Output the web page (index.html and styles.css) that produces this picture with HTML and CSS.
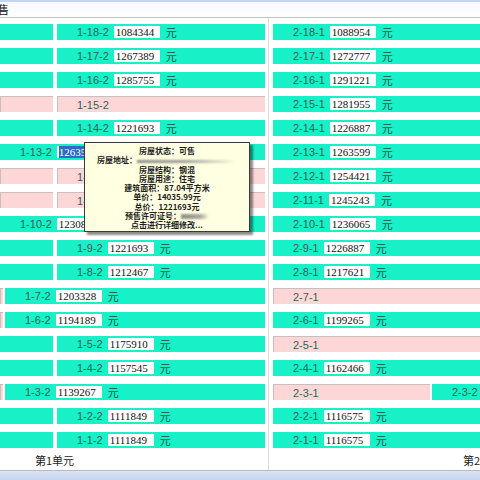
FILE: index.html
```html
<!DOCTYPE html>
<html lang="zh-CN">
<head>
  <meta charset="UTF-8">
  <title>房屋销售</title>
  <link rel="stylesheet" href="styles.css">
</head>
<body>
  <div class="window">
    <div class="titlebar"><span class="title">售</span></div>

    <div class="units">
      <!-- 第1单元 -->
      <div class="unit unit-1">
        <div class="rooms">
          <div class="row"><div class="cell sale stub"></div><div class="cell sale room"><span class="no">1-18-2</span><span class="price">1084344</span><span class="yuan">元</span></div></div>
          <div class="row"><div class="cell sale stub"></div><div class="cell sale room"><span class="no">1-17-2</span><span class="price">1267389</span><span class="yuan">元</span></div></div>
          <div class="row"><div class="cell sale stub"></div><div class="cell sale room"><span class="no">1-16-2</span><span class="price">1285755</span><span class="yuan">元</span></div></div>
          <div class="row"><div class="cell sold stub"></div><div class="cell sold room"><span class="no">1-15-2</span></div></div>
          <div class="row"><div class="cell sale stub"></div><div class="cell sale room"><span class="no">1-14-2</span><span class="price">1221693</span><span class="yuan">元</span></div></div>
          <div class="row"><div class="cell sale room"><span class="no">1-13-2</span><span class="price"><span class="selected">1263599</span></span><span class="yuan">元</span></div></div>
          <div class="row"><div class="cell sold stub"></div><div class="cell sold room"><span class="no">1-12-2</span></div></div>
          <div class="row"><div class="cell sold stub"></div><div class="cell sold room"><span class="no">1-11-2</span></div></div>
          <div class="row"><div class="cell sale room"><span class="no">1-10-2</span><span class="price">1230836</span><span class="yuan">元</span></div></div>
          <div class="row"><div class="cell sale stub"></div><div class="cell sale room"><span class="no">1-9-2</span><span class="price">1221693</span><span class="yuan">元</span></div></div>
          <div class="row"><div class="cell sale stub"></div><div class="cell sale room"><span class="no">1-8-2</span><span class="price">1212467</span><span class="yuan">元</span></div></div>
          <div class="row narrow"><div class="cell sold stub"></div><div class="cell sale room"><span class="no">1-7-2</span><span class="price">1203328</span><span class="yuan">元</span></div></div>
          <div class="row narrow"><div class="cell sold stub"></div><div class="cell sale room"><span class="no">1-6-2</span><span class="price">1194189</span><span class="yuan">元</span></div></div>
          <div class="row"><div class="cell sale stub"></div><div class="cell sale room"><span class="no">1-5-2</span><span class="price">1175910</span><span class="yuan">元</span></div></div>
          <div class="row"><div class="cell sale stub"></div><div class="cell sale room"><span class="no">1-4-2</span><span class="price">1157545</span><span class="yuan">元</span></div></div>
          <div class="row narrow"><div class="cell sold stub"></div><div class="cell sale room"><span class="no">1-3-2</span><span class="price">1139267</span><span class="yuan">元</span></div></div>
          <div class="row"><div class="cell sale stub"></div><div class="cell sale room"><span class="no">1-2-2</span><span class="price">1111849</span><span class="yuan">元</span></div></div>
          <div class="row"><div class="cell sale stub"></div><div class="cell sale room"><span class="no">1-1-2</span><span class="price">1111849</span><span class="yuan">元</span></div></div>
        </div>
        <div class="unit-name">第1单元</div>
      </div>

      <div class="divider"></div>

      <!-- 第2单元 -->
      <div class="unit unit-2">
        <div class="rooms">
          <div class="row"><div class="cell sale room"><span class="no">2-18-1</span><span class="price">1088954</span><span class="yuan">元</span></div></div>
          <div class="row"><div class="cell sale room"><span class="no">2-17-1</span><span class="price">1272777</span><span class="yuan">元</span></div></div>
          <div class="row"><div class="cell sale room"><span class="no">2-16-1</span><span class="price">1291221</span><span class="yuan">元</span></div></div>
          <div class="row"><div class="cell sale room"><span class="no">2-15-1</span><span class="price">1281955</span><span class="yuan">元</span></div></div>
          <div class="row"><div class="cell sale room"><span class="no">2-14-1</span><span class="price">1226887</span><span class="yuan">元</span></div></div>
          <div class="row"><div class="cell sale room"><span class="no">2-13-1</span><span class="price">1263599</span><span class="yuan">元</span></div></div>
          <div class="row"><div class="cell sale room"><span class="no">2-12-1</span><span class="price">1254421</span><span class="yuan">元</span></div></div>
          <div class="row"><div class="cell sale room"><span class="no">2-11-1</span><span class="price">1245243</span><span class="yuan">元</span></div></div>
          <div class="row"><div class="cell sale room"><span class="no">2-10-1</span><span class="price">1236065</span><span class="yuan">元</span></div></div>
          <div class="row"><div class="cell sale room"><span class="no">2-9-1</span><span class="price">1226887</span><span class="yuan">元</span></div></div>
          <div class="row"><div class="cell sale room"><span class="no">2-8-1</span><span class="price">1217621</span><span class="yuan">元</span></div></div>
          <div class="row"><div class="cell sold room"><span class="no">2-7-1</span></div></div>
          <div class="row"><div class="cell sale room"><span class="no">2-6-1</span><span class="price">1199265</span><span class="yuan">元</span></div></div>
          <div class="row"><div class="cell sold room"><span class="no">2-5-1</span></div></div>
          <div class="row"><div class="cell sale room"><span class="no">2-4-1</span><span class="price">1162466</span><span class="yuan">元</span></div></div>
          <div class="row split"><div class="cell sold room half"><span class="no">2-3-1</span></div><div class="cell sale room"><span class="no">2-3-2</span></div></div>
          <div class="row"><div class="cell sale room"><span class="no">2-2-1</span><span class="price">1116575</span><span class="yuan">元</span></div></div>
          <div class="row"><div class="cell sale room"><span class="no">2-1-1</span><span class="price">1116575</span><span class="yuan">元</span></div></div>
        </div>
        <div class="unit-name">第2单元</div>
      </div>
    </div>

    <div class="statusbar"></div>

    <!-- 房屋信息提示 -->
    <div class="tip">
      <div>房屋状态：可售</div>
      <div>房屋地址：<span class="smudge long"></span></div>
      <div>房屋结构：钢混</div>
      <div>房屋用途：住宅</div>
      <div>建筑面积：87.04平方米</div>
      <div>单价：14035.99元</div>
      <div>总价：1221693元</div>
      <div>预售许可证号：<span class="smudge"></span></div>
      <div>点击进行详细修改...</div>
    </div>
  </div>
</body>
</html>
```

FILE: styles.css
```css
body {
  margin: 0;
  background: #fff;
  font-family: "Liberation Sans", Arial, sans-serif;
  overflow: hidden;
}

.window {
  position: relative;
  width: 480px;
  height: 480px;
  overflow: hidden;
}

.titlebar {
  height: 17px;
  border-bottom: 1px solid #b8c5da;
  background: linear-gradient(#c6d5ef 0, #c6d5ef 2px, #f6f8fd 2px, #fff 17px);
  overflow: hidden;
}

.title {
  display: block;
  margin-left: -2px;
  padding-top: 3px;
  font: 11px/12px "Noto Sans CJK SC", sans-serif;
  color: #111;
}

.units {
  display: flex;
  height: 452px;
}

.unit {
  display: flex;
  flex-direction: column;
  padding-top: 6px;
  overflow: hidden;
}

.unit-1 {
  width: 265px;
}

.unit-2 {
  width: 207px;
}

.divider {
  width: 8px;
  background: linear-gradient(to right, transparent 3px, #d9d9d9 3px, #d9d9d9 4px, transparent 4px);
}

.rooms {
  display: flex;
  flex-direction: column;
  gap: 8px;
}

.row {
  display: flex;
  gap: 4px;
  height: 16px;
}

.row.narrow {
  gap: 2px;
}

.row.narrow .stub {
  width: 3px;
}

.row.split {
  gap: 2px;
}

.cell {
  box-sizing: border-box;
  height: 16px;
}

.sale {
  background: #18f0c8;
}

.sold {
  background: #fdd7d7;
  border-top: 1px solid #cdbdbd;
  border-left: 1px solid #cdbdbd;
}

.stub {
  width: 53px;
  flex: none;
}

.room {
  flex: 1;
  display: flex;
  align-items: center;
  padding-left: 20px;
  white-space: nowrap;
  min-width: 0;
}

.unit-2 .room {
  flex: none;
  width: 240px;
}

.unit-2 .room.half {
  width: 157px;
}

.sold.room {
  padding-left: 19px;
}

.no {
  font-size: 11px;
  color: #3e5d55;
  margin-right: 5px;
}

.price {
  width: 44px;
  height: 12px;
  padding-left: 2px;
  background: #fff;
  font: 11px/12px "Liberation Serif", "Times New Roman", serif;
  color: #111;
}

.selected {
  background: #3169c6;
  color: #fff;
}

.yuan {
  margin-left: 6px;
  font: 11px/12px "Noto Sans CJK SC", sans-serif;
  color: #2d4a42;
}

.unit-name {
  height: 20px;
  margin-top: 2px;
  font: 11px/20px "Noto Sans CJK SC", sans-serif;
  color: #1a1a1a;
  white-space: nowrap;
}

.unit-1 .unit-name {
  padding-left: 35px;
}

.unit-2 .unit-name {
  padding-left: 190px;
}

.statusbar {
  height: 9px;
  border-top: 1px solid #aebcd2;
  background: linear-gradient(#dbe4f4, #c6d4ee);
}

.tip {
  position: absolute;
  left: 84px;
  top: 142px;
  box-sizing: border-box;
  width: 166px;
  height: 90px;
  padding-top: 3px;
  border: 1px solid #3a3a3a;
  background: #ffffe1;
  box-shadow: 3px 3px 2px rgba(0, 0, 0, 0.45);
  font: bold 8px/9.25px "Noto Sans CJK SC", sans-serif;
  color: #1e1e1e;
  text-align: center;
  white-space: nowrap;
}

.tip div {
  height: 9.25px;
}

.smudge {
  display: inline-block;
  width: 28px;
  height: 5px;
  vertical-align: middle;
  background: linear-gradient(to right, #8e8e8a, #a8a8a0 70%, rgba(200, 200, 190, 0));
  filter: blur(1px);
}

.smudge.long {
  width: 100px;
  height: 3px;
  background: linear-gradient(to right, #8a8a86, #a0a09a 50%, rgba(210, 210, 200, 0));
}
```
